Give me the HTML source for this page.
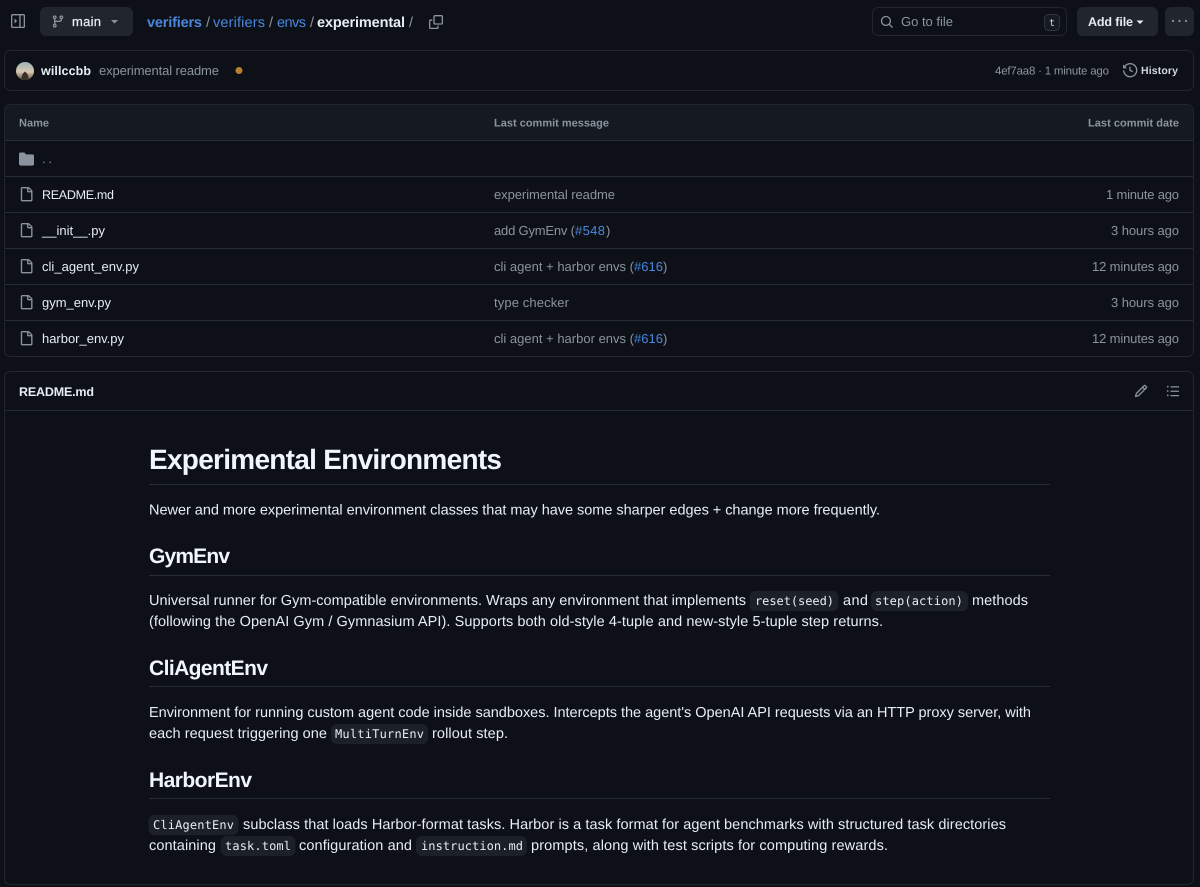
<!DOCTYPE html>
<html lang="en"><head><meta charset="utf-8"><title>verifiers/envs/experimental</title>
<style>
html,body{margin:0;padding:0;background:#0d1117;width:1200px;height:887px;overflow:hidden}
svg{display:block}
text{font-family:"Liberation Sans",sans-serif;font-size:13px;fill:#e6edf3;text-rendering:geometricPrecision}
.m{fill:#8b949e}.b{font-weight:700}.l{fill:#4a86dc}
.p{font-size:14.5px;fill:#e6edf3}
.c{font-family:"DejaVu Sans Mono","Liberation Mono",monospace;font-size:12px;fill:#e6edf3}
.h2{font-size:21px;font-weight:700;fill:#f0f6fc}
.ln{stroke:#262c35;stroke-width:1}
.chip{fill:#1c2128}
.i{fill:#8b949e}
</style></head><body>
<svg width="1200" height="887" viewBox="0 0 1200 887" xmlns="http://www.w3.org/2000/svg">
<defs>
<path id="file" d="M2 1.75C2 .784 2.784 0 3.75 0h6.586c.464 0 .909.184 1.237.513l2.914 2.914c.329.328.513.773.513 1.237v9.586A1.75 1.75 0 0 1 13.25 16h-9.5A1.75 1.75 0 0 1 2 14.25Zm1.75-.25a.25.25 0 0 0-.25.25v12.5c0 .138.112.25.25.25h9.5a.25.25 0 0 0 .25-.25V6h-2.75A1.75 1.75 0 0 1 9 4.25V1.5Zm6.75.062V4.25c0 .138.112.25.25.25h2.688l-.011-.013-2.914-2.914-.013-.011Z"/>
<linearGradient id="av" x1="0" y1="0" x2="0" y2="1"><stop offset="0" stop-color="#9fb2b8"/><stop offset=".55" stop-color="#d8c8b0"/><stop offset="1" stop-color="#5c5146"/></linearGradient>
</defs>
<rect width="1200" height="887" fill="#0d1117"/>

<!-- top bar -->
<g class="i" transform="translate(11,14)"><path transform="scale(.875)" fill-rule="evenodd" d="M6.823 7.823a.25.25 0 0 1 0 .354l-2.396 2.396A.25.25 0 0 1 4 10.396V5.604a.25.25 0 0 1 .427-.177ZM1.75 0h12.5C15.216 0 16 .784 16 1.75v12.5A1.75 1.75 0 0 1 14.25 16H1.75A1.75 1.75 0 0 1 0 14.25V1.75C0 .784.784 0 1.75 0ZM1.5 1.75v12.5c0 .138.112.25.25.25H9.5v-13H1.75a.25.25 0 0 0-.25.25ZM11 14.5h3.25a.25.25 0 0 0 .25-.25V1.75a.25.25 0 0 0-.25-.25H11Z"/></g>
<rect x="40" y="7" width="93" height="29" rx="6" fill="#21262d"/>
<g class="i" transform="translate(51,14.500)"><path transform="scale(.875)" d="M9.5 3.25a2.25 2.25 0 1 1 3 2.122V6A2.5 2.5 0 0 1 10 8.5H6a1 1 0 0 0-1 1v1.128a2.251 2.251 0 1 1-1.5 0V5.372a2.25 2.25 0 1 1 1.5 0v1.836A2.493 2.493 0 0 1 6 7h4a1 1 0 0 0 1-1v-.628A2.25 2.25 0 0 1 9.5 3.25Zm-6 0a.75.75 0 1 0 1.5 0 .75.75 0 0 0-1.5 0Zm8.25-.75a.75.75 0 1 0 0 1.5.75.75 0 0 0 0-1.5ZM4.250 12a.75.75 0 1 0 0 1.5.75.75 0 0 0 0-1.5Z"/></g>
<text x="72" y="26" textLength="29" style="stroke:#e6edf3;stroke-width:.25">main</text>
<path d="M111 20h7l-3.500 3.500Z" class="i"/>
<text x="147" y="27" class="l b" style="font-size:14.500px" textLength="55">verifiers</text>
<text x="206" y="27" class="m" style="font-size:14.500px">/</text>
<text x="213" y="27" class="l" style="font-size:14.500px" textLength="52">verifiers</text>
<text x="269" y="27" class="m" style="font-size:14.500px">/</text>
<text x="277" y="27" class="l" style="font-size:14.500px" textLength="29">envs</text>
<text x="310" y="27" class="m" style="font-size:14.500px">/</text>
<text x="317" y="27" class="b" style="font-size:14.500px" textLength="88">experimental</text>
<text x="409" y="27" class="m" style="font-size:14.500px">/</text>
<g class="i" transform="translate(429,15)"><path transform="scale(.875)" d="M0 6.75C0 5.784.784 5 1.750 5h1.500a.75.75 0 0 1 0 1.500h-1.500a.25.25 0 0 0-.25.25v7.500c0 .138.112.25.25.25h7.500a.25.25 0 0 0 .25-.25v-1.500a.75.75 0 0 1 1.500 0v1.500A1.750 1.750 0 0 1 9.250 16h-7.500A1.750 1.750 0 0 1 0 14.250Z"/><path transform="scale(.875)" d="M5 1.750C5 .784 5.784 0 6.750 0h7.500C15.216 0 16 .784 16 1.750v7.500A1.750 1.750 0 0 1 14.250 11h-7.500A1.750 1.750 0 0 1 5 9.250Zm1.750-.25a.25.25 0 0 0-.25.25v7.500c0 .138.112.25.25.25h7.500a.25.25 0 0 0 .25-.25v-7.500a.25.25 0 0 0-.25-.25Z"/></g>

<rect x="872.500" y="7.500" width="194" height="28" rx="6" fill="#0d1117" stroke="#21262d"/>
<g class="i" transform="translate(880,15)"><path transform="scale(.85)" d="M10.680 11.740a6 6 0 0 1-7.922-8.982 6 6 0 0 1 8.982 7.922l3.040 3.040a.749.749 0 0 1-.326 1.275.749.749 0 0 1-.734-.215ZM11.500 7a4.499 4.499 0 1 0-8.997 0A4.499 4.499 0 0 0 11.500 7Z"/></g>
<text x="901" y="26" class="m" textLength="52">Go to file</text>
<rect x="1044.500" y="14.500" width="15" height="16" rx="4" fill="#161b22" stroke="#30363d"/>
<text x="1049" y="26" class="c" style="font-size:10px;fill:#c9d1d9">t</text>
<rect x="1077" y="7" width="81" height="29" rx="6" fill="#21262d"/>
<text x="1088" y="26" class="b" style="font-size:12.5px" textLength="45">Add file</text>
<path d="M1136.500 20.500h7l-3.500 3.500Z" fill="#e6edf3"/>
<rect x="1165" y="7" width="29" height="29" rx="6" fill="#21262d"/>
<g class="i"><circle cx="1173" cy="21" r="1.100"/><circle cx="1179.500" cy="21" r="1.100"/><circle cx="1186" cy="21" r="1.100"/></g>

<!-- commit bar -->
<rect x="4.500" y="50.500" width="1189" height="40" rx="6" fill="#0d1117" stroke="#21262d"/>
<circle cx="25" cy="71" r="9" fill="url(#av)"/>
<path d="M21 80l1.500-6 2.500-2.500 2.500 2.500 1.500 6Z" fill="#3a3229"/>
<text x="41" y="75" class="b" style="font-size:12.5px" textLength="50">willccbb</text>
<text x="99" y="75" class="m" textLength="120">experimental readme</text>
<circle cx="239" cy="70.500" r="3.500" fill="#b5812c"/>
<text x="995" y="74.500" class="m" style="font-size:11.500px" textLength="114">4ef7aa8 · 1 minute ago</text>
<g class="i" transform="translate(1123,63)"><path transform="scale(.9)" d="m.427 1.927 1.215 1.215a8.002 8.002 0 1 1-1.600 5.685.75.75 0 1 1 1.493-.154 6.500 6.500 0 1 0 1.180-4.458l1.358 1.358A.25.25 0 0 1 3.896 6H.25A.25.25 0 0 1 0 5.750V2.104a.25.25 0 0 1 .427-.177ZM7.750 4a.75.75 0 0 1 .75.75v2.992l2.028.812a.75.75 0 0 1-.557 1.392l-2.500-1A.751.751 0 0 1 7 8.250v-3.500A.75.75 0 0 1 7.750 4Z"/></g>
<text x="1141" y="74" class="b" style="font-size:10.5px;fill:#d0d7de" textLength="37">History</text>

<!-- file table -->
<rect x="4.500" y="104.500" width="1189" height="252" rx="6" fill="#0d1117" stroke="#21262d"/>
<path d="M5 140.500V110.500a5.500 5.500 0 0 1 5.500-5.500H1187.500a5.500 5.500 0 0 1 5.500 5.500V140.500Z" fill="#151a21"/>
<path class="ln" d="M5 140.500H1193M5 176.500H1193M5 212.500H1193M5 248.500H1193M5 284.500H1193M5 320.500H1193"/>
<text x="19" y="126.500" class="m b" style="font-size:11px" textLength="30">Name</text>
<text x="494" y="126.500" class="m b" style="font-size:11px" textLength="115">Last commit message</text>
<text x="1088" y="126.500" class="m b" style="font-size:11px" textLength="91">Last commit date</text>
<path transform="translate(19,151.500) scale(.9375)" class="i" d="M1.750 1A1.750 1.750 0 0 0 0 2.750v10.500C0 14.216.784 15 1.750 15h12.500A1.750 1.750 0 0 0 16 13.250v-8.500A1.750 1.750 0 0 0 14.250 3H7.500a.25.25 0 0 1-.2-.1l-.9-1.200C6.070 1.260 5.550 1 5 1H1.750Z"/>
<text x="42" y="163" class="m" textLength="10">..</text>
<use href="#file" class="i" transform="translate(19,187) scale(.9)"/>
<use href="#file" class="i" transform="translate(19,223) scale(.9)"/>
<use href="#file" class="i" transform="translate(19,259) scale(.9)"/>
<use href="#file" class="i" transform="translate(19,295) scale(.9)"/>
<use href="#file" class="i" transform="translate(19,331) scale(.9)"/>
<text x="42" y="199" style="font-size:12.5px" textLength="72">README.md</text>
<text x="42" y="235" textLength="63">__init__.py</text>
<text x="42" y="271" textLength="97">cli_agent_env.py</text>
<text x="42" y="307" textLength="69">gym_env.py</text>
<text x="42" y="343" textLength="82">harbor_env.py</text>
<text x="494" y="199" class="m" textLength="121">experimental readme</text>
<text x="494" y="235" class="m" textLength="81">add GymEnv (</text><text x="575" y="235" class="l" textLength="30">#548</text><text x="606" y="235" class="m">)</text>
<text x="494" y="271" class="m" textLength="140">cli agent + harbor envs (</text><text x="634" y="271" class="l" textLength="29">#616</text><text x="663" y="271" class="m">)</text>
<text x="494" y="307" class="m" textLength="75">type checker</text>
<text x="494" y="343" class="m" textLength="140">cli agent + harbor envs (</text><text x="634" y="343" class="l" textLength="29">#616</text><text x="663" y="343" class="m">)</text>
<text x="1106" y="199" class="m" textLength="73">1 minute ago</text>
<text x="1111" y="235" class="m" textLength="68">3 hours ago</text>
<text x="1092" y="271" class="m" textLength="87">12 minutes ago</text>
<text x="1111" y="307" class="m" textLength="68">3 hours ago</text>
<text x="1092" y="343" class="m" textLength="87">12 minutes ago</text>

<!-- readme -->
<rect x="4.500" y="371.500" width="1189" height="513" rx="6" fill="#0d1117" stroke="#21262d"/>
<path class="ln" d="M5 410.500H1193"/>
<text x="19" y="396" class="b" style="font-size:12.5px" textLength="75">README.md</text>
<g class="i" transform="translate(1134,384)"><path transform="scale(.875)" d="M11.013 1.427a1.750 1.750 0 0 1 2.474 0l1.086 1.086a1.750 1.750 0 0 1 0 2.474l-8.610 8.610c-.21.21-.47.364-.756.445l-3.251.93a.75.75 0 0 1-.927-.928l.929-3.250c.081-.286.235-.547.445-.758l8.610-8.610Zm.176 4.823L9.750 4.810l-6.286 6.287a.253.253 0 0 0-.064.108l-.558 1.953 1.953-.558a.253.253 0 0 0 .108-.064Zm1.238-3.763a.25.25 0 0 0-.354 0L10.811 3.750l1.439 1.440 1.263-1.263a.25.25 0 0 0 0-.354Z"/></g>
<g class="i" transform="translate(1166,384)"><path transform="scale(.875)" d="M5.750 2.500h8.500a.75.75 0 0 1 0 1.500h-8.500a.75.75 0 0 1 0-1.500Zm0 5h8.500a.75.75 0 0 1 0 1.500h-8.500a.75.75 0 0 1 0-1.500Zm0 5h8.500a.75.75 0 0 1 0 1.500h-8.500a.75.75 0 0 1 0-1.500ZM2 14a1 1 0 1 1 0-2 1 1 0 0 1 0 2Zm1-6a1 1 0 1 1-2 0 1 1 0 0 1 2 0ZM2 4a1 1 0 1 1 0-2 1 1 0 0 1 0 2Z"/></g>

<text x="149" y="469" style="font-size:28px;font-weight:700;fill:#f0f6fc" textLength="353">Experimental Environments</text>
<path class="ln" d="M149 484.500H1050M149 575.500H1050M149 686.500H1050M149 798.500H1050"/>
<text x="149" y="514.500" class="p" textLength="731">Newer and more experimental environment classes that may have some sharper edges + change more frequently.</text>

<text x="149" y="563" class="h2" textLength="81">GymEnv</text>
<text x="149" y="605" class="p" textLength="597">Universal runner for Gym-compatible environments. Wraps any environment that implements</text>
<rect class="chip" x="749.500" y="591" width="89" height="20" rx="6"/>
<text x="755" y="605" class="c" textLength="79">reset(seed)</text>
<text x="843" y="605" class="p" textLength="25">and</text>
<rect class="chip" x="871" y="591" width="97" height="20" rx="6"/>
<text x="875" y="605" class="c" textLength="88">step(action)</text>
<text x="972" y="605" class="p" textLength="56">methods</text>
<text x="149" y="626" class="p" textLength="734">(following the OpenAI Gym / Gymnasium API). Supports both old-style 4-tuple and new-style 5-tuple step returns.</text>

<text x="149" y="675" class="h2" textLength="119">CliAgentEnv</text>
<text x="149" y="717" class="p" textLength="882">Environment for running custom agent code inside sandboxes. Intercepts the agent's OpenAI API requests via an HTTP proxy server, with</text>
<text x="149" y="738" class="p" textLength="178">each request triggering one</text>
<rect class="chip" x="331" y="724" width="97" height="20" rx="6"/>
<text x="335" y="738" class="c" textLength="89">MultiTurnEnv</text>
<text x="432" y="738" class="p" textLength="76">rollout step.</text>

<text x="149" y="787" class="h2" textLength="103">HarborEnv</text>
<rect class="chip" x="148.500" y="815" width="90" height="20" rx="6"/>
<text x="153" y="829" class="c" textLength="81">CliAgentEnv</text>
<text x="243" y="829" class="p" textLength="763">subclass that loads Harbor-format tasks. Harbor is a task format for agent benchmarks with structured task directories</text>
<text x="149" y="850" class="p" textLength="67">containing</text>
<rect class="chip" x="220.500" y="836" width="75" height="20" rx="6"/>
<text x="225" y="850" class="c" textLength="66">task.toml</text>
<text x="299" y="850" class="p" textLength="113">configuration and</text>
<rect class="chip" x="416" y="836" width="111" height="20" rx="6"/>
<text x="421" y="850" class="c" textLength="102">instruction.md</text>
<text x="531" y="850" class="p" textLength="357">prompts, along with test scripts for computing rewards.</text>
</svg>
</body></html>
